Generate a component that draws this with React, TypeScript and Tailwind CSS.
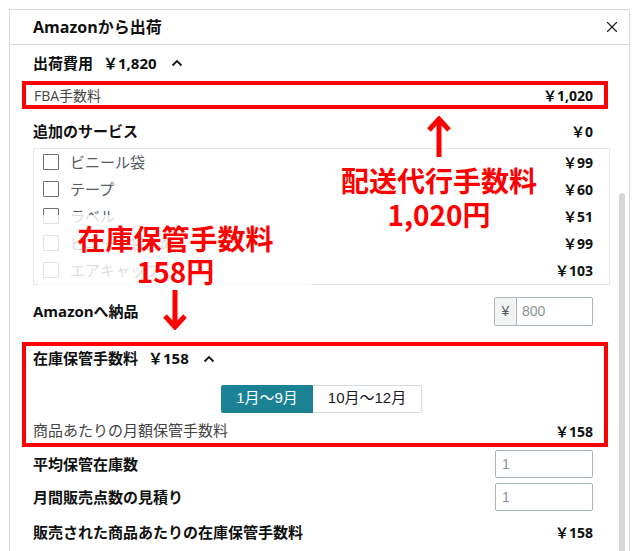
import { X } from 'lucide-react';

const services = [
	{ name: 'ビニール袋', price: '￥99' },
	{ name: 'テープ', price: '￥60' },
	{ name: 'ラベル', price: '￥51' },
	{ name: 'ビニール袋詰め', price: '￥99' },
	{ name: 'エアキャップ', price: '￥103' },
];

const Caret = () => (
	<svg width="12" height="8" viewBox="0 0 12 8" className="ml-[14px]">
		<polyline points="1.5,6.5 6,2 10.5,6.5" fill="none" stroke="#16191f" strokeWidth="1.8" />
	</svg>
);

const Price = ({ children }: { children: string }) => (
	<span className="text-[14px] font-bold text-[#0f1111]">{children}</span>
);

const NumberInput = ({ value }: { value: string }) => (
	<div className="w-[98px] h-[28px] border border-[#aab7b8] rounded-[2px] flex items-center px-[6px] text-[14px] text-[#879596] font-['Liberation_Sans',sans-serif]">
		{value}
	</div>
);

const App = () => {
	return (
		<div className="relative w-[640px] h-[551px] overflow-hidden bg-white text-[#0f1111] font-['Open_Sans','Noto_Sans_CJK_JP',sans-serif]">
			<div className="ml-[9px] mt-[9px] w-[621px] h-[542px] border-l border-t border-r border-[#d5dbdb] flex flex-col">
				<div className="h-[35px] shrink-0 border-b border-[#d5dbdb] flex items-center justify-between pl-[23px] pr-[8px]">
					<span className="text-[16px] font-bold">Amazonから出荷</span>
					<X size={18} strokeWidth={1.5} color="#16191f" />
				</div>
				<div className="flex flex-1 min-h-0">
					<div className="flex-1 pl-[23px] pr-[26px] flex flex-col">
						<div className="h-[36px] flex items-center text-[15px] font-bold">
							<span>出荷費用</span>
							<span className="ml-[10px]">￥1,820</span>
							<Caret />
						</div>

						<div className="h-[28px] -ml-[11px] -mr-[15px] border-4 border-[#ff0000] flex items-center justify-between pl-[8px] pr-[11px] pt-[2px]">
							<span className="text-[14px] text-[#444]">FBA手数料</span>
							<Price>￥1,020</Price>
						</div>

						<div className="h-[39px] pt-[6px] flex items-center justify-between">
							<span className="text-[15px] font-bold">追加のサービス</span>
							<Price>￥0</Price>
						</div>

						<div className="-mr-[17px] border border-[#e3e8e8] flex flex-col">
							{services.map(s => (
								<div key={s.name} className="h-[27px] flex items-center pl-[9px] pr-[16px]">
									<span className="w-[16px] h-[16px] border-[1.5px] border-[#687078] rounded-[1px]" />
									<span className="ml-[11px] text-[15px] text-[#545b64]">{s.name}</span>
									<span className="ml-auto">
										<Price>{s.price}</Price>
									</span>
								</div>
							))}
						</div>

						<div className="h-[57px] flex items-center justify-between pb-[3px]">
							<span className="text-[15px] font-bold">Amazonへ納品</span>
							<div className="w-[99px] h-[29px] border border-[#aab7b8] rounded-[2px] flex font-['Liberation_Sans',sans-serif]">
								<span className="w-[22px] bg-[#f2f3f3] border-r border-[#aab7b8] flex items-center justify-center text-[14px] text-[#545b64]">
									¥
								</span>
								<span className="flex items-center pl-[5px] text-[14px] text-[#879596]">800</span>
							</div>
						</div>

						<div className="h-[106px] -ml-[11px] -mr-[15px] border-4 border-[#ff0000] flex flex-col pl-[7px] pr-[11px]">
							<div className="h-[26px] flex items-center text-[15px] font-bold">
								<span>在庫保管手数料</span>
								<span className="ml-[10px]">￥158</span>
								<Caret />
							</div>
							<div className="mt-[13px] pl-[188px] flex font-['Liberation_Sans','Noto_Sans_CJK_JP',sans-serif] text-[15px]">
								<span className="w-[92px] h-[28px] bg-[#1b8296] text-white flex items-center justify-center rounded-l-[2px]">
									1月〜9月
								</span>
								<span className="w-[109px] h-[28px] border border-l-0 border-[#d5dbdb] text-[#16191f] flex items-center justify-center rounded-r-[2px]">
									10月〜12月
								</span>
							</div>
							<div className="flex-1 flex items-end justify-between pb-[1px]">
								<span className="text-[15px] text-[#444] mb-[1px]">商品あたりの月額保管手数料</span>
								<Price>￥158</Price>
							</div>
						</div>

						<div className="h-[34px] flex items-center justify-between">
							<span className="text-[15px] font-bold">平均保管在庫数</span>
							<NumberInput value="1" />
						</div>
						<div className="h-[32px] flex items-center justify-between">
							<span className="text-[15px] font-bold">月間販売点数の見積り</span>
							<NumberInput value="1" />
						</div>
						<div className="h-[38px] flex items-center justify-between">
							<span className="text-[15px] font-bold">販売された商品あたりの在庫保管手数料</span>
							<Price>￥158</Price>
						</div>
					</div>
					<div className="w-[10px] flex flex-col">
						<div className="mt-[148px] w-[6px] flex-1 bg-[#d6d6d6] rounded-t-full" />
					</div>
				</div>
			</div>

			{/* annotation: shipping agency fee */}
			<svg className="absolute left-[427px] top-[116px]" width="24" height="42" viewBox="0 0 24 42">
				<line x1="12" y1="4" x2="12" y2="41" stroke="#ff0000" strokeWidth="5" />
				<polyline points="2,14 12,3 22,14" fill="none" stroke="#ff0000" strokeWidth="5" />
			</svg>
			<div className="absolute left-[339px] top-[163px] w-[200px] text-center text-[#ff0000] text-[28px] font-bold leading-[34px] font-['Noto_Sans_CJK_JP',sans-serif]">
				配送代行手数料
				<br />
				1,020円
			</div>

			{/* annotation: storage fee */}
			<div className="absolute left-[38px] top-[215px] w-[273px] h-[77px] bg-white/80" />
			<div className="absolute left-[60px] top-[222px] w-[231px] text-center text-[#ff0000] text-[28px] font-bold leading-[33px] font-['Noto_Sans_CJK_JP',sans-serif]">
				在庫保管手数料
				<br />
				158円
			</div>
			<svg className="absolute left-[163px] top-[290px]" width="24" height="40" viewBox="0 0 24 40">
				<line x1="12" y1="0" x2="12" y2="36" stroke="#ff0000" strokeWidth="5" />
				<polyline points="2,26 12,37 22,26" fill="none" stroke="#ff0000" strokeWidth="5" />
			</svg>
		</div>
	);
};

export default App;
